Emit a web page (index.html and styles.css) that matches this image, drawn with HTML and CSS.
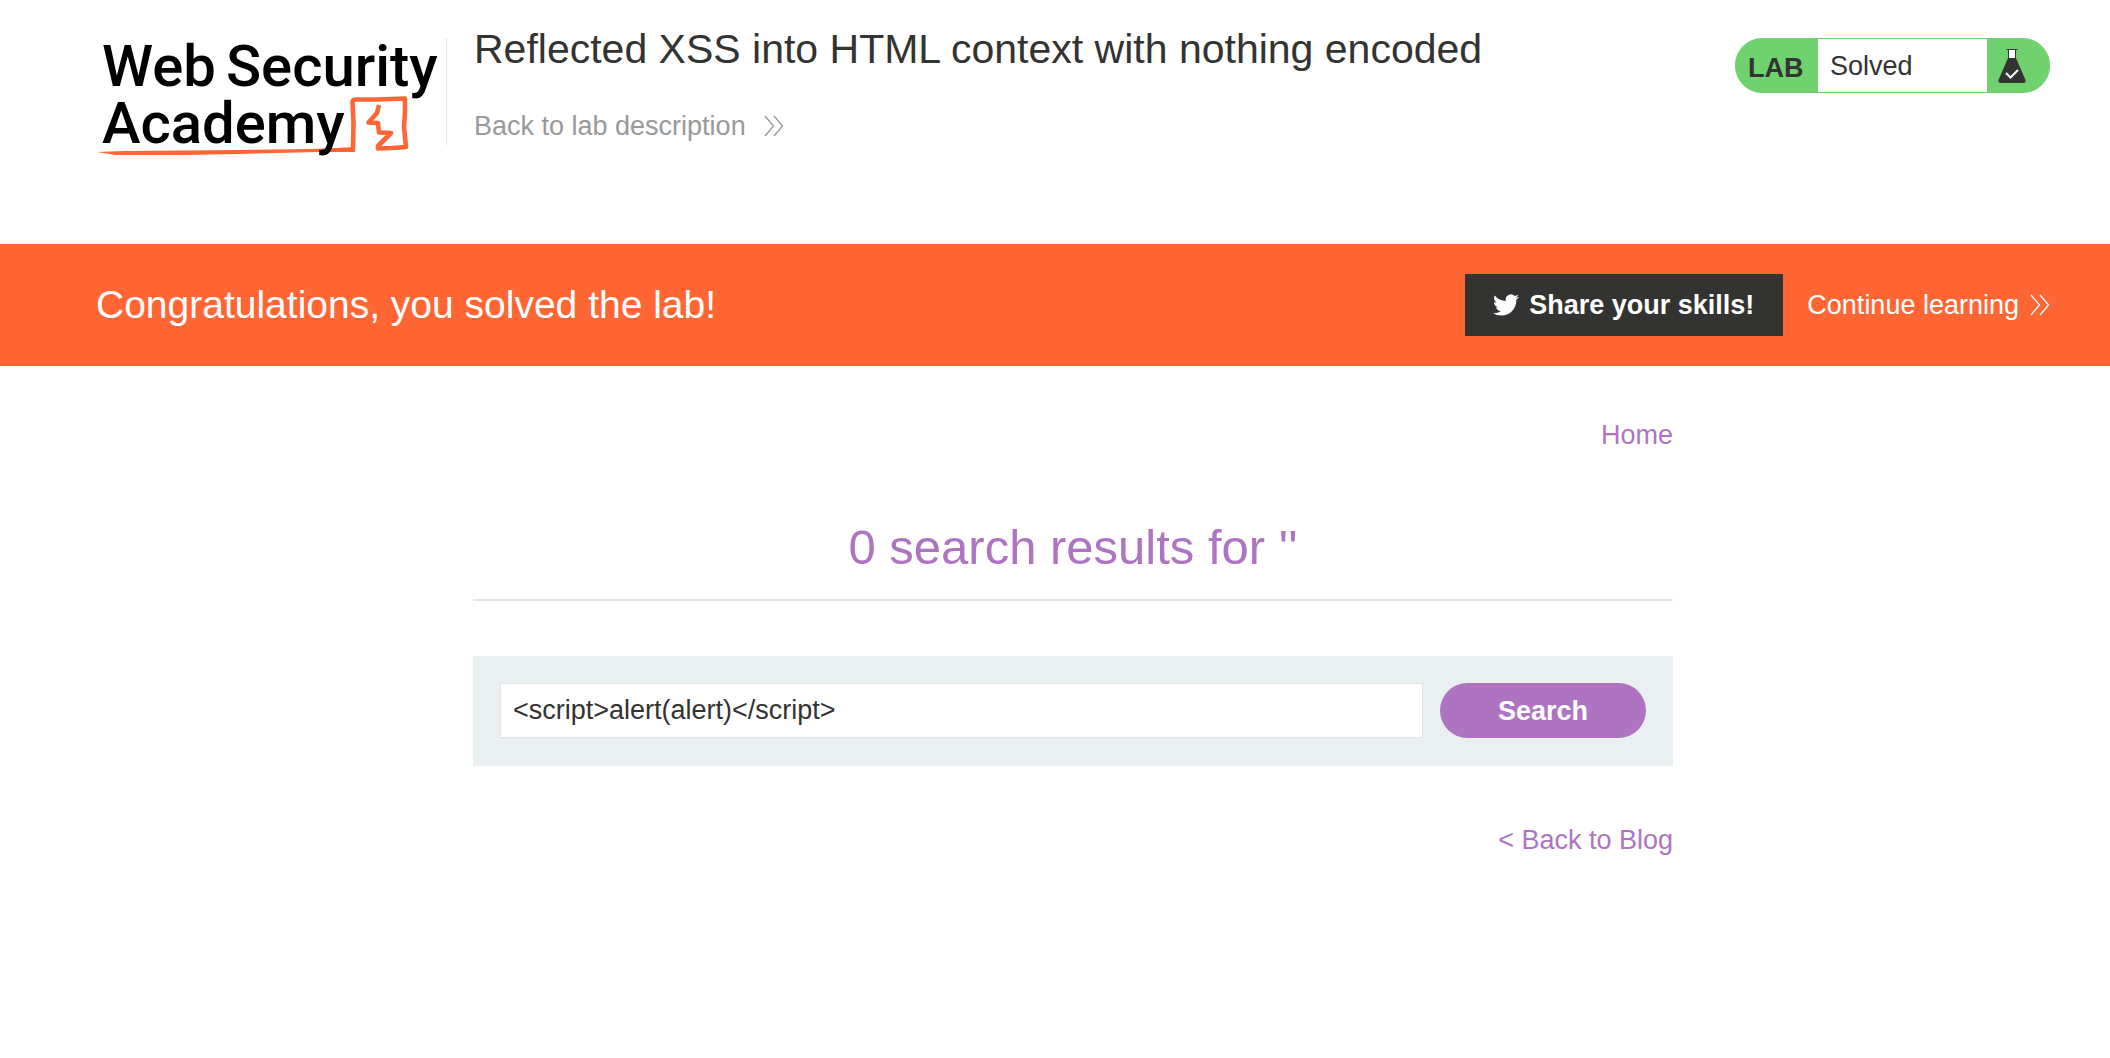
FILE: index.html
```html
<!DOCTYPE html>
<html lang="en">
<head>
<meta charset="utf-8">
<meta name="viewport" content="width=device-width, initial-scale=1">
<title>Reflected XSS into HTML context with nothing encoded</title>
<link rel="stylesheet" href="styles.css">
</head>
<body>
<header class="lab-header">
  <a class="logo" href="#" aria-label="Web Security Academy">
    <svg width="350" height="130" viewBox="0 0 350 130">
      <path class="logo-fill" d="M1 124 L28 123 L142 122 L215 121 L240 120 L259 119 L259 124 L225 124 L142 126 L90 127 L20 127 Z"/>
      <path class="logo-line" d="M257 121 L257.500 96 L256.500 74 Q256.500 71.500 260 71.500 L280 71.500 L309 70.500 L309 84 L308 99 L310 119 L296 120 L282 120.500 L282 118 L295 105 L283 104.500 L282 95 L272.500 94.500 L281 85 L283 77"/>
      <g class="logo-text">
        <text x="6" y="58">Web</text>
        <text x="130" y="58">Security</text>
        <text x="6" y="115">Academy</text>
      </g>
    </svg>
  </a>
  <div class="title">
    <h1>Reflected XSS into HTML context with nothing encoded</h1>
    <a class="back" href="#">Back to lab description
      <svg class="arrow" width="20" height="22" viewBox="0 0 20 22"><path d="M1 1 L9.500 11 L1 21 M10 1 L18.500 11 L10 21"/></svg>
    </a>
  </div>
  <div class="status">
    <span class="status-label">LAB</span>
    <span class="status-value">Solved</span>
    <span class="status-icon">
      <svg width="28" height="36" viewBox="0 0 28 36">
        <path d="M10.500 2 H17.500 V10 H10.500 Z" fill="#fff"/>
        <path d="M8.500 1.500 H19.500 M10.500 2 V10 M17.500 2 V10" fill="none" stroke="#333332" stroke-width="1"/>
        <path d="M10 10 H18 L27.500 32 Q28 35 25 35 H3 Q0 35 .5 32 Z" fill="#333332"/>
        <path d="M8 25 L12.500 29.500 L20 22" fill="none" stroke="#fff" stroke-width="2"/>
      </svg>
    </span>
  </div>
</header>

<section class="banner">
  <h2>Congratulations, you solved the lab!</h2>
  <div class="banner-actions">
    <button class="share" type="button">
      <svg width="26" height="24" viewBox="0 2 24 20"><path fill="#fff" d="M23.950 4.570a10 10 0 0 1-2.820.770 4.960 4.960 0 0 0 2.160-2.720c-.950.550-2 .950-3.130 1.180a4.920 4.920 0 0 0-8.380 4.480A13.900 13.900 0 0 1 1.640 3.160a4.920 4.920 0 0 0 1.520 6.570 4.900 4.900 0 0 1-2.230-.610v.060a4.920 4.920 0 0 0 3.950 4.830 5 5 0 0 1-2.210.080 4.940 4.940 0 0 0 4.600 3.420A9.870 9.870 0 0 1 0 19.540a14 14 0 0 0 7.550 2.210c9.050 0 14-7.500 14-13.980 0-.210 0-.420-.020-.630a9.940 9.940 0 0 0 2.460-2.550z"/></svg>
      Share your skills!
    </button>
    <a class="continue" href="#">Continue learning
      <svg class="arrow" width="20" height="22" viewBox="0 0 20 22"><path d="M1 1 L9.500 11 L1 21 M10 1 L18.500 11 L10 21"/></svg>
    </a>
  </div>
</section>

<main class="page">
  <div class="container">
    <nav class="links"><a href="#">Home</a></nav>
    <h1 class="results">0 search results for ''</h1>
    <form class="search">
      <input type="text" aria-label="Search the blog" value="&lt;script&gt;alert(alert)&lt;/script&gt;">
      <button type="button">Search</button>
    </form>
    <div class="links"><a href="#">&lt; Back to Blog</a></div>
  </div>
</main>
</body>
</html>
```

FILE: styles.css
```css
* { box-sizing: border-box; }

body {
  margin: 0;
  background: #fff;
  color: #333332;
  font: 27px/32px "Liberation Sans", Arial, sans-serif;
}

h1, h2 { margin: 0; font-weight: 400; }
a { text-decoration: none; }

.arrow { fill: none; stroke: currentColor; stroke-width: 1.3; }

.lab-header {
  display: flex;
  align-items: flex-start;
  min-height: 244px;
  padding: 24px 60px 0 96px;
}

.logo {
  flex: none;
  height: 107px;
  margin-top: 14px;
  border-right: 1px solid #e2e2e2;
}
.logo svg { display: block; margin-top: -10px; overflow: visible; }
.logo-text { font: 500 58px Roboto, sans-serif; fill: #000; }
.logo-line { fill: none; stroke: #f63; stroke-width: 4.6; stroke-linejoin: round; }
.logo-fill { fill: #f63; }

.title { flex: 1; padding-left: 27px; }
.title h1 { font-size: 41px; line-height: 50px; }
.back {
  display: inline-flex;
  align-items: center;
  gap: 18px;
  margin-top: 36px;
  color: #999;
}

.status {
  display: flex;
  width: 315px;
  height: 55px;
  margin-top: 14px;
  overflow: hidden;
  border: 1px solid #70d26e;
  border-radius: 27px;
  background: #70d26e;
}
.status-label {
  width: 82px;
  padding: 13px 0 0 12px;
  font-weight: 700;
}
.status-value {
  flex: 1;
  padding: 11px 12px;
  background: #fff;
}
.status-icon { width: 62px; padding: 9px 11px; }
.status-icon svg { display: block; }

.banner {
  display: flex;
  align-items: center;
  justify-content: space-between;
  min-height: 122px;
  padding: 30px 60px 30px 96px;
  background: #f63;
  color: #fff;
}
.banner h2 { font-size: 39px; line-height: 48px; }
.banner-actions { display: flex; align-items: center; gap: 24px; }
.share {
  display: flex;
  align-items: center;
  gap: 10px;
  height: 62px;
  padding: 0 29px 0 28px;
  border: 0;
  background: #333332;
  color: #fff;
  font: inherit;
  font-weight: 700;
}
.continue { display: flex; align-items: center; gap: 11px; color: #fff; }

.page { padding: 53px 60px 53px 96px; }
.container { max-width: 1200px; margin: 0 auto; }
.links { text-align: right; }
.links a { color: #ae74c2; }
.results {
  margin: 66px 0 55px;
  padding-bottom: 22px;
  border-bottom: 2px solid #e4e4e4;
  color: #ae74c2;
  font-size: 49px;
  line-height: 60px;
  text-align: center;
}
.search {
  display: flex;
  gap: 17px;
  margin-bottom: 58px;
  padding: 27px 27px 28px;
  background: #eaeff2;
}
.search input {
  flex: 1;
  min-width: 0;
  height: 55px;
  padding: 0 12px;
  border: 1px solid #e4e4e4;
  background: #fff;
  color: #333332;
  font: inherit;
}
.search button {
  width: 206px;
  height: 55px;
  border: 0;
  border-radius: 28px;
  background: #ae74c2;
  color: #fff;
  font: inherit;
  font-weight: 700;
}
```
